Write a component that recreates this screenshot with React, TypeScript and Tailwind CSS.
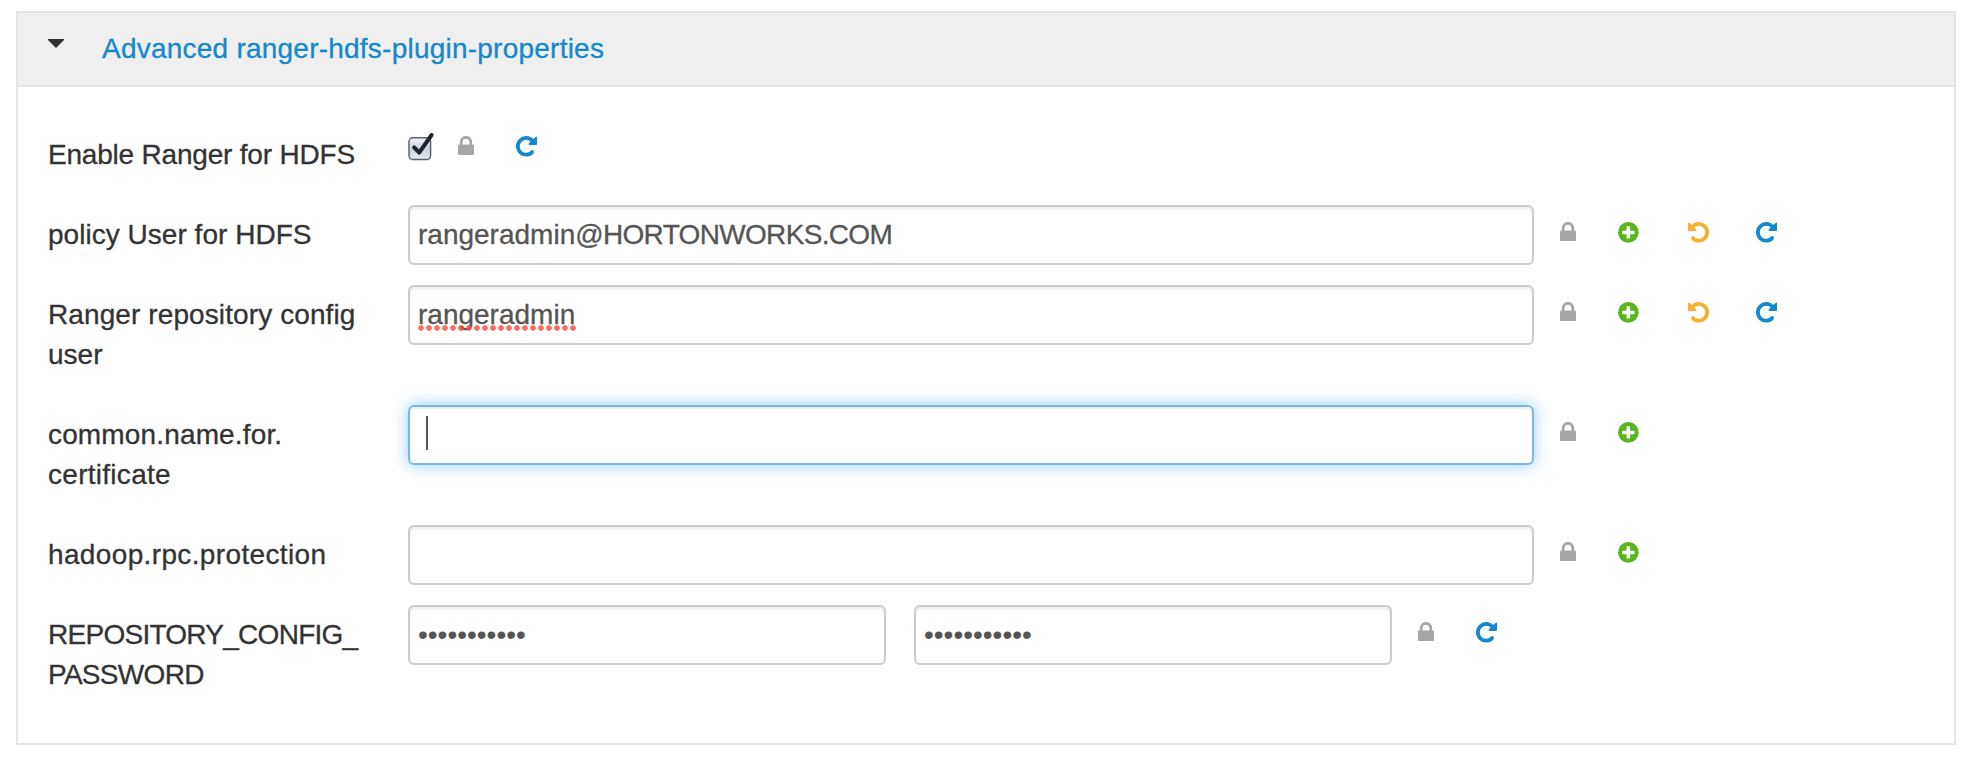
import type { ReactNode } from "react";

const iconBase = "block shrink-0";

function LockIcon() {
  return (
    <svg className={iconBase} width="16" height="19" viewBox="0 0 16 19">
      <path d="M3.2 9.5V6.2a4.8 4.9 0 0 1 9.6 0v3.3" fill="none" stroke="#a6a6a6" strokeWidth="2.7" />
      <rect x="0" y="8.6" width="16" height="10.4" rx="1" fill="#a6a6a6" />
    </svg>
  );
}

function PlusIcon() {
  return (
    <svg className={iconBase} width="21" height="21" viewBox="0 0 21 21">
      <circle cx="10.35" cy="10.4" r="10.3" fill="#5ab41f" />
      <rect x="8.6" y="4.2" width="3.5" height="12.4" rx=".6" fill="#fff" />
      <rect x="4.15" y="8.65" width="12.4" height="3.5" rx=".6" fill="#fff" />
    </svg>
  );
}

function TurnArrow({ color, flip = false }: { color: string; flip?: boolean }) {
  return (
    <svg className={iconBase} width="21" height="21" viewBox="0 0 21 21">
      <g transform={flip ? "translate(21 0) scale(-1 1)" : undefined}>
        <path d="M16.4 4.6A8.4 8.4 0 1 0 16.4 16" fill="none" stroke={color} strokeWidth="3.8" />
        <circle cx="16.2" cy="15.8" r="1.7" fill={color} />
        <path d="M21 1V8.2a.7 .7 0 0 1-.7 .7H13.4q-1.4-.4-.6-1.7L19.5 1Q20.6 .1 21 1z" fill={color} />
      </g>
    </svg>
  );
}

const Redo = () => <TurnArrow color="#1488cc" />;
const Undo = () => <TurnArrow color="#f5b02e" flip />;

function Checkbox() {
  return (
    <svg className="block shrink-0" width="28" height="30" viewBox="0 0 28 30">
      <defs>
        <linearGradient id="box" x1="0" y1="0" x2="0" y2="1">
          <stop offset="0" stopColor="#f2f4f6" />
          <stop offset=".5" stopColor="#c9d0d8" />
          <stop offset="1" stopColor="#e3ebf3" />
        </linearGradient>
      </defs>
      <rect x="1" y="6.5" width="21.6" height="22" rx="4" fill="none" stroke="#d5d5d5" />
      <rect x="1" y="5.8" width="21.6" height="21.6" rx="4" fill="url(#box)" stroke="#5c6067" strokeWidth="1.4" />
      <path d="M6.2 15.4L11.2 20.6L23.6 3" fill="none" stroke="#1b2531" strokeWidth="4" strokeLinecap="round" strokeLinejoin="round" />
    </svg>
  );
}

function Field({ children, focused = false, width = "w-[1126px]" }: { children?: ReactNode; focused?: boolean; width?: string }) {
  return (
    <div
      className={`${width} flex h-[60px] shrink-0 items-center rounded-md border-2 bg-white px-2 text-[#555] ${
        focused
          ? "border-[#75b9f0] shadow-[inset_0_2px_2px_rgba(0,0,0,0.075),0_0_16px_rgba(82,168,236,0.6)]"
          : "border-[#ccc] shadow-[inset_0_2px_2px_rgba(0,0,0,0.075)]"
      }`}
    >
      {children}
    </div>
  );
}

function Row({ label, tall = false, children }: { label: ReactNode; tall?: boolean; children: ReactNode }) {
  return (
    <div className={`flex items-start ${tall ? "h-[120px]" : "h-20"}`}>
      <div className="w-[360px] shrink-0 pt-2.5 whitespace-nowrap text-[#333]">{label}</div>
      {children}
    </div>
  );
}

function Actions({ changed = false }: { changed?: boolean }) {
  return (
    <div className="ml-[26px] flex pt-[17px]">
      <LockIcon />
      <div className="ml-[42px]"><PlusIcon /></div>
      {changed && (
        <>
          <div className="ml-[49px]"><Undo /></div>
          <div className="ml-[47px]"><Redo /></div>
        </>
      )}
    </div>
  );
}

export default function App() {
  return (
    <div className="h-[766px] bg-white pt-[11px] pl-4 font-['Liberation_Sans',sans-serif] text-[28px] leading-10 [-webkit-text-stroke:0.3px]">
      <section className="h-[734px] w-[1940px] border-2 border-[#e5e5e5]">
        <header className="flex h-[74px] border-b-2 border-[#e5e5e5] bg-[#efefef] pl-[30px]">
          <svg className="mt-[26px] shrink-0" width="16" height="9" viewBox="0 0 16 9">
            <path d="M0 0h16v1L8 9 0 1z" fill="#333" />
          </svg>
          <h2 className="mt-[16px] ml-[38px] tracking-[0.23px] text-[#1488cc]">Advanced ranger-hdfs-plugin-properties</h2>
        </header>
        <div className="pt-[38px] pl-[30px]">
          <Row label={<span className="tracking-[-0.2px]">Enable Ranger for HDFS</span>}>
            <div className="flex pt-[7px]">
              <Checkbox />
              <div className="mt-1 ml-[22px]"><LockIcon /></div>
              <div className="mt-1 ml-[42px]"><Redo /></div>
            </div>
          </Row>
          <Row label={<span className="tracking-[0.03px]">policy User for HDFS</span>}>
            <Field>rangeradmin<span className="tracking-[-0.67px]">@HORTONWORKS.COM</span></Field>
            <Actions changed />
          </Row>
          <Row tall label={<><span className="tracking-[0.1px]">Ranger repository config</span><br /><span>user</span></>}>
            <Field>
              <span className="relative">
                rangeradmin
                <span className="absolute top-[30px] left-0 h-[6px] w-[160px] bg-[radial-gradient(circle_at_3px_3px,#f8473bcc_2.4px,transparent_3.2px)] bg-[length:8px_6px]" />
              </span>
            </Field>
            <Actions changed />
          </Row>
          <Row tall label={<><span className="tracking-[0.15px]">common.name.for.</span><br /><span className="tracking-[0.28px]">certificate</span></>}>
            <Field focused>
              <span className="mb-1 ml-2 h-[34px] w-0.5 bg-[#555]" />
            </Field>
            <Actions />
          </Row>
          <Row label={<span className="tracking-[0.36px]">hadoop.rpc.protection</span>}>
            <Field />
            <Actions />
          </Row>
          <Row tall label={<><span className="tracking-[-0.73px]">REPOSITORY_CONFIG_</span><br /><span className="tracking-[-0.7px]">PASSWORD</span></>}>
            <Field width="w-[478px]"><span className="[-webkit-text-stroke:0]">•••••••••••</span></Field>
            <div className="ml-7"><Field width="w-[478px]"><span className="[-webkit-text-stroke:0]">•••••••••••</span></Field></div>
            <div className="ml-[26px] flex pt-[17px]">
              <LockIcon />
              <div className="ml-[42px]"><Redo /></div>
            </div>
          </Row>
        </div>
      </section>
    </div>
  );
}
